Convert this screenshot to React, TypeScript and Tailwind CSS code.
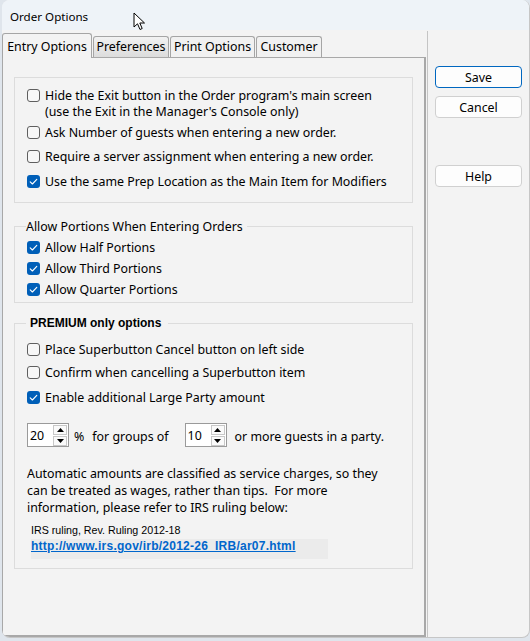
import React from "react";

function Check({ checked }: { checked?: boolean }) {
  if (checked) {
    return (
      <span className="mt-[1.5px] flex h-[13px] w-[13px] shrink-0 items-center justify-center rounded-[3px] bg-[#005fb8]">
        <svg width="13" height="13" viewBox="0 0 13 13">
          <polyline points="3.2,6.8 5.4,9 9.8,4.3" fill="none" stroke="#ffffff" strokeWidth="1.1" strokeLinecap="round" strokeLinejoin="round" />
        </svg>
      </span>
    );
  }
  return <span className="mt-[1.5px] h-[13px] w-[13px] shrink-0 rounded-[3px] border border-[#5f5f5f] bg-[#f7f7f7]" />;
}

function Row({ checked, children, className = "" }: { checked?: boolean; children: React.ReactNode; className?: string }) {
  return (
    <div className={`flex items-start gap-[5px] ${className}`}>
      <Check checked={checked} />
      <span className="translate-y-[1px] leading-[16px]">{children}</span>
    </div>
  );
}

function Spin({ value }: { value: string }) {
  return (
    <div className="flex h-[24px] w-[42px] items-center justify-between border border-[#9a9a9a] bg-white pl-[2px] pr-[1px]">
      <span className="translate-y-[1px] leading-[16px]">{value}</span>
      <div className="flex flex-col gap-[1px]">
        <div className="flex h-[10px] w-[14px] items-center justify-center border border-[#c8c8c8] bg-[#fafafa]">
          <svg width="7" height="4" viewBox="0 0 7 4"><polygon points="3.5,0 7,4 0,4" fill="#000" /></svg>
        </div>
        <div className="flex h-[10px] w-[14px] items-center justify-center border border-[#c8c8c8] bg-[#fafafa]">
          <svg width="7" height="4" viewBox="0 0 7 4"><polygon points="0,0 7,0 3.5,4" fill="#000" /></svg>
        </div>
      </div>
    </div>
  );
}

function Btn({ children, focused }: { children: React.ReactNode; focused?: boolean }) {
  return (
    <div
      className={`flex h-[22px] w-[87px] items-center justify-center rounded-[4px] border bg-[#fdfdfd] leading-[16px] ${
        focused ? "border-[#0067c0]" : "border-[#d0d0d0]"
      }`}
    >
      <span className="translate-y-[1px]">{children}</span>
    </div>
  );
}

export default function App() {
  return (
    <div className="relative h-[641px] w-[530px] overflow-hidden bg-[#dfe5ec] pl-[2px] font-['Noto_Sans',sans-serif] text-[12.4px] text-[#000]">
      <div className="flex h-[638px] w-[528px] flex-col overflow-hidden rounded-[8px] border-r border-b border-[#c6c6c6] bg-[#f3f3f3]">
        {/* title bar */}
        <div className="h-[30px] shrink-0 bg-[#eef3f8] pl-[8px] pt-[9px] text-[11.6px] leading-[16px]">Order Options</div>

        <div className="flex min-h-0 flex-1">
          {/* left: tab control */}
          <div className="flex w-[424px] flex-col">
            <div className="flex h-[27px] items-end">
              <div className="relative z-10 -mb-px h-[25px] w-[90px] rounded-t-[3px] border-t border-r border-l border-[#a5a5a5] bg-[#f3f3f3] pt-[5px] text-center leading-[16px]">
                Entry Options
              </div>
              <div className="ml-[1px] h-[21px] w-[76px] rounded-t-[3px] border-t border-r border-l border-[#a5a5a5] bg-gradient-to-b from-[#f2f2f2] to-[#dcdcdc] pt-[2px] text-center leading-[16px]">
                Preferences
              </div>
              <div className="ml-[1px] h-[21px] w-[85px] rounded-t-[3px] border-t border-r border-l border-[#a5a5a5] bg-[#f1f1f1] pt-[2px] text-center leading-[16px]">
                Print Options
              </div>
              <div className="ml-[1px] h-[21px] w-[66px] rounded-t-[3px] border-t border-r border-l border-[#a5a5a5] bg-[#f1f1f1] pt-[2px] text-center leading-[16px]">
                Customer
              </div>
            </div>

            <div className="flex flex-1 flex-col border-t border-l border-r-2 border-b-2 border-[#a8a8a8] pl-[11px] pt-[19px]">
              {/* group 1 */}
              <div className="w-[399px] border border-[#dcdcdc] pt-[9px] pb-[13px] pl-[12px]">
                <Row>
                  Hide the Exit button in the Order program's main screen
                  <br />
                  (use the Exit in the Manager's Console only)
                </Row>
                <Row className="mt-[5px]">Ask Number of guests when entering a new order.</Row>
                <Row className="mt-[8px]">Require a server assignment when entering a new order.</Row>
                <Row className="mt-[9px]" checked>
                  Use the same Prep Location as the Main Item for Modifiers
                </Row>
              </div>

              {/* group 2 */}
              <fieldset className="mt-[15px] w-[399px] border border-[#dcdcdc] pb-[5px] pl-[12px]">
                <legend className="ml-[-1px] pr-[4px] leading-[16px]">
                  <span className="inline-block translate-y-[1px]">Allow Portions When Entering Orders</span>
                </legend>
                <Row className="mt-[5px]" checked>Allow Half Portions</Row>
                <Row className="mt-[5px]" checked>Allow Third Portions</Row>
                <Row className="mt-[5px]" checked>Allow Quarter Portions</Row>
              </fieldset>

              {/* group 3 */}
              <fieldset className="mt-[13px] w-[399px] border border-[#dcdcdc] pb-[9px] pl-[12px]">
                <legend className="ml-[-1px] pl-[4px] pr-[7px] font-['Liberation_Sans',sans-serif] text-[12px] leading-[14px] font-bold">
                  PREMIUM only options
                </legend>
                <Row className="mt-[11px]">Place Superbutton Cancel button on left side</Row>
                <Row className="mt-[7px]">Confirm when cancelling a Superbutton item</Row>
                <Row className="mt-[9px]" checked>
                  Enable additional Large Party amount
                </Row>

                <div className="mt-[18px] flex items-center">
                  <Spin value="20" />
                  <span className="ml-[5px] mt-[4px] leading-[16px]">%</span>
                  <span className="ml-[8px] mt-[4px] leading-[16px]">for groups of</span>
                  <div className="ml-[16px]">
                    <Spin value="10" />
                  </div>
                  <span className="ml-[8px] mt-[4px] leading-[16px]">or more guests in a party.</span>
                </div>

                <p className="mt-[17px] translate-y-[1px] whitespace-pre leading-[17px]">
                  {"Automatic amounts are classified as service charges, so they\ncan be treated as wages, rather than tips.  For more\ninformation, please refer to IRS ruling below:"}
                </p>

                <div className="ml-[4px] mt-[8px] font-['Liberation_Sans',sans-serif] text-[10.7px] leading-[14px]">
                  IRS ruling, Rev. Ruling 2012-18
                </div>
                <div className="ml-[4px] mt-[2px] h-[20px] w-[297px] bg-[#ebebeb] leading-[14px]">
                  <span className="font-['Liberation_Sans',sans-serif] text-[12px] leading-[14px] font-bold tracking-[0.25px] text-[#0066cc] underline">
                    http://www.irs.gov/irb/2012-26_IRB/ar07.html
                  </span>
                </div>
              </fieldset>
            </div>
          </div>

          {/* right: buttons */}
          <div className="ml-[1px] mt-[1px] flex flex-1 flex-col border-l border-[#c4c4c4] pl-[7px] pt-[35px]">
            <Btn focused>Save</Btn>
            <div className="mt-[8px]">
              <Btn>Cancel</Btn>
            </div>
            <div className="mt-[47px]">
              <Btn>Help</Btn>
            </div>
          </div>
        </div>
      </div>

      {/* mouse cursor */}
      <svg className="absolute left-[133px] top-[12px]" width="14" height="19" viewBox="0 0 14 19">
        <path d="M1 1 L1 15 L4.5 11.8 L7 17.5 L9.2 16.5 L6.8 11 L11.5 11 Z" fill="#fff" stroke="#000" strokeWidth="1" strokeLinejoin="round" />
      </svg>
    </div>
  );
}
